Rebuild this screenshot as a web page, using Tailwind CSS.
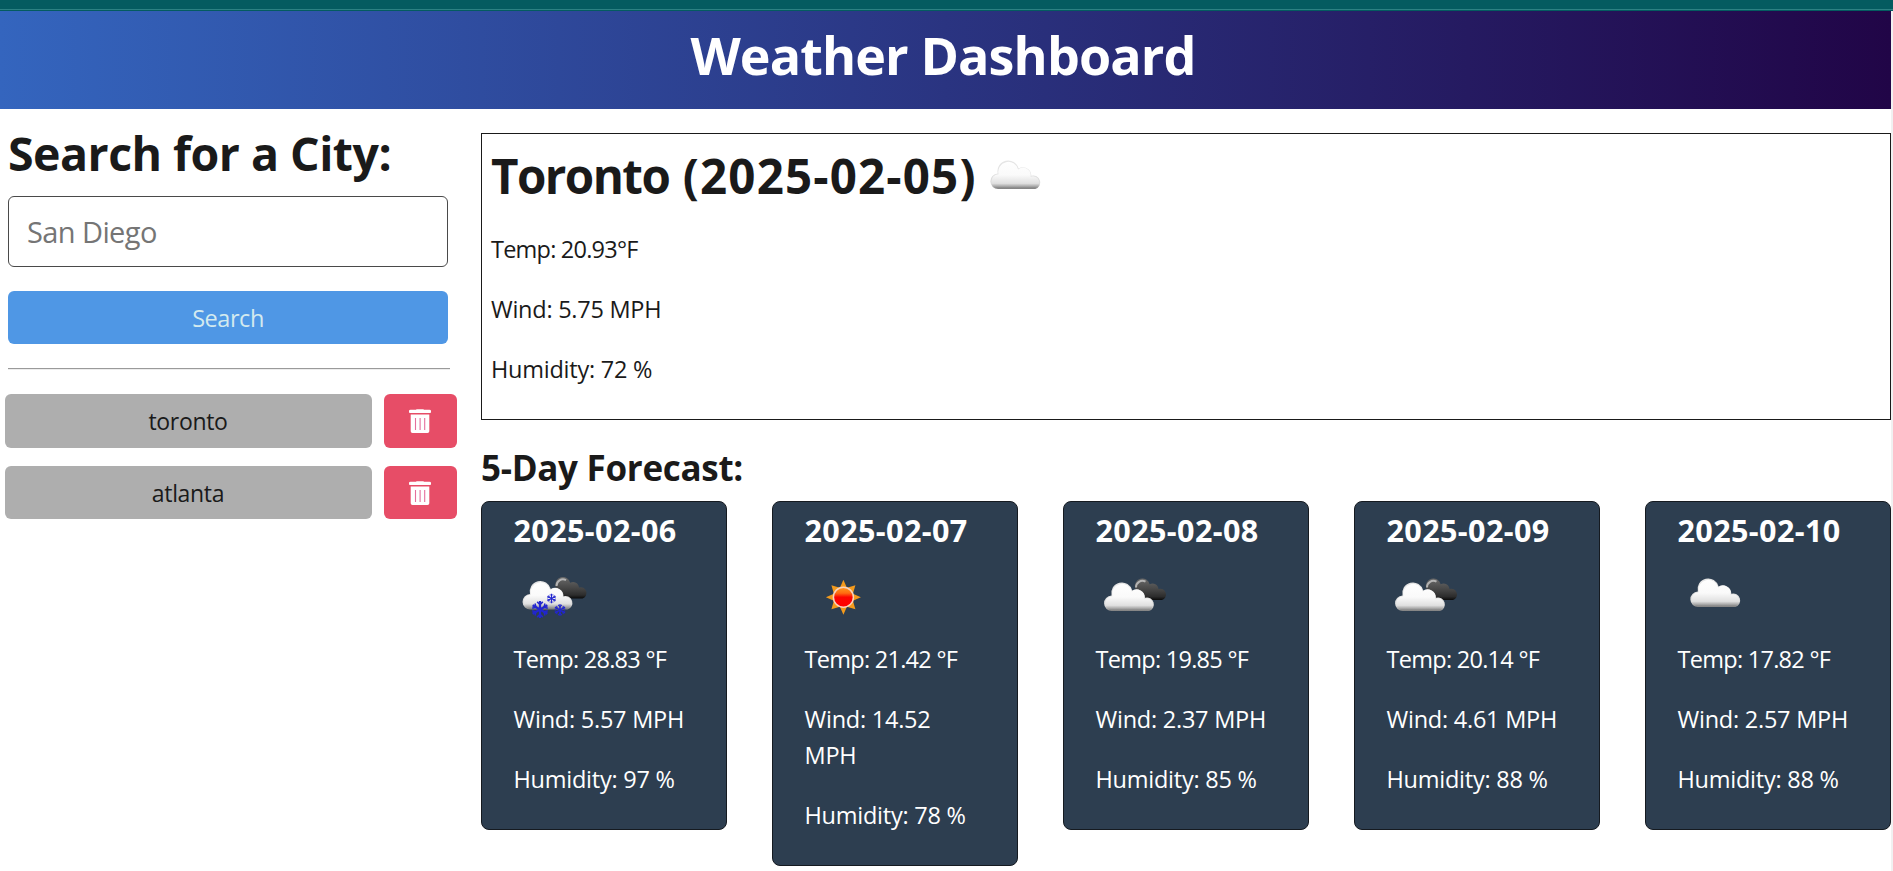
<!DOCTYPE html>
<html lang="en">
<head>
<meta charset="utf-8">
<title>Weather Dashboard</title>
<script src="https://cdn.jsdelivr.net/npm/@tailwindcss/browser@4"></script>
</head>
<body class="h-[871px] overflow-hidden bg-white font-['Open_Sans',sans-serif] text-[23.5px] leading-9 text-[#1a1a1a]">
<svg class="absolute size-0">
  <defs>
    <linearGradient id="white" gradientUnits="userSpaceOnUse" x1="0" y1="22" x2="0" y2="52">
      <stop offset="0" stop-color="#fff"/><stop offset=".5" stop-color="#fafafa"/><stop offset=".78" stop-color="#e0e0e0"/><stop offset=".88" stop-color="#a8a8a8"/><stop offset="1" stop-color="#585858"/>
    </linearGradient>
    <linearGradient id="edge" gradientUnits="userSpaceOnUse" x1="0" y1="22" x2="0" y2="52">
      <stop offset="0" stop-color="#e6e6e6"/><stop offset=".8" stop-color="#dadada"/><stop offset="1" stop-color="#707070"/>
    </linearGradient>
    <linearGradient id="dark" gradientUnits="userSpaceOnUse" x1="0" y1="19" x2="0" y2="41">
      <stop offset="0" stop-color="#686868"/><stop offset=".55" stop-color="#414141"/><stop offset=".8" stop-color="#2c2c2c"/><stop offset="1" stop-color="#000"/>
    </linearGradient>
    <linearGradient id="sunfill" x1="0" y1="0" x2="0" y2="1">
      <stop offset="0" stop-color="#ff9a1c"/><stop offset=".3" stop-color="#ff6a10"/><stop offset=".5" stop-color="#fb0500"/><stop offset="1" stop-color="#ff0000"/>
    </linearGradient>
    <path id="shape" d="M31 51a7.7 7.7 0 0 1-.5-15.4A10.6 10.6 0 0 1 51.3 30.6A8.4 8.4 0 0 1 64 37.8A6.8 6.8 0 1 1 68 51Z"/>
    <g id="cloud"><use href="#shape" fill="url(#edge)"/><path d="M31 50.3a7 7 0 0 1 .2-14A9.8 9.8 0 0 1 50.8 31.6A7.6 7.6 0 0 1 63.3 38.7A6 6 0 1 1 68 50.3Z" fill="url(#white)"/></g>
    <g id="darkcloud">
      <path d="M54 28a7.5 7.5 0 0 1 14.7-3.8A6 6 0 0 1 77.5 29A5.6 5.6 0 0 1 81 40H60Z" fill="url(#dark)"/>
      <path d="M55 27.5a6.4 6.4 0 0 1 9.5-5.8" fill="none" stroke="#b4b4b4" stroke-width="2"/>
    </g>
    <g id="flake" fill="none" stroke="#2226cf" stroke-width="2.2">
      <path d="M0-8.5V8.5M-7.4-4.2L7.4 4.2M-7.4 4.2L7.4-4.2"/>
      <path stroke-width="1.5" d="M-2.8-7.6L0-4.8L2.8-7.6M-2.8 7.6L0 4.8L2.8 7.6M-7.8-1.2L-4-2.3L-5-6M7.8 1.2L4 2.3L5 6M-7.8 1.2L-4 2.3L-5 6M7.8-1.2L4-2.3L5-6"/>
    </g>
    <g id="trash">
      <path fill="#fff" d="M7 0.8Q7 .2 7.8 .2H14.2Q15 .2 15 .8H20.5Q22 .8 22 2V3.2Q22 4 21 4H1Q0 4 0 3.2V2Q0 .8 1.5 .8ZM1.7 5.5H20.3V22.3Q20.3 24 18.5 24H3.5Q1.7 24 1.7 22.3Z"/>
      <path stroke="#e56f9d" stroke-width="1.1" d="M6.5 9V21M11.1 9V21M15.7 9V21"/>
    </g>
  </defs>
</svg>

<div class="h-[9px] bg-[#045b60]"></div>
<div class="h-px bg-[#2c8183]"></div>
<div class="h-px bg-[#045b60]"></div>

<div class="flex h-[860px]">
  <div class="w-[1891px] shrink-0">
    <header class="h-[98px] bg-linear-to-r/srgb from-[#3465be] via-[#2a3481] to-[#210547] pt-[11px] pr-[5px] text-center text-[52px] leading-[66px] font-bold tracking-[-0.87px] text-white">
      <h1>Weather Dashboard</h1>
    </header>

    <div class="flex">
      <aside class="w-[481px] shrink-0 pt-[15px]">
        <h2 class="pl-2 text-[46.5px] leading-[58px] font-bold tracking-[-0.53px]">Search for a City:</h2>
        <input class="mt-[14px] ml-2 block h-[71px] w-[440px] rounded-md border border-[#4a4a4a] px-[18px] text-[29px] tracking-[-0.6px] placeholder:text-[#757575]" placeholder="San Diego">
        <button class="mt-6 ml-2 block h-[53px] w-[440px] rounded-md bg-[#4f97e5] text-center tracking-[-0.45px] text-[#d3eaef]">Search</button>
        <hr class="mt-6 ml-2 h-[2px] w-[442px] border-t border-b border-t-[#9a9a9a] border-b-[#ededed]">
        <div class="mt-6 ml-[5px] flex h-[54px] gap-3">
          <button class="w-[367px] rounded-md bg-[#aeaeae] pr-px text-[23px] tracking-[-0.33px]">toronto</button>
          <button class="flex w-[73px] items-start justify-center rounded-md bg-[#e74d67] pt-[15px] pr-px"><svg class="h-6 w-[22px]" viewBox="0 0 22 24"><use href="#trash"/></svg></button>
        </div>
        <div class="mt-[18px] ml-[5px] flex h-[53px] gap-3">
          <button class="w-[367px] rounded-md bg-[#aeaeae] pr-px text-[23px] tracking-[-0.33px]">atlanta</button>
          <button class="flex w-[73px] items-start justify-center rounded-md bg-[#e74d67] pt-[15px] pr-px"><svg class="h-6 w-[22px]" viewBox="0 0 22 24"><use href="#trash"/></svg></button>
        </div>
      </aside>

      <main class="w-[1410px] shrink-0 pt-6">
        <section class="h-[287px] border border-[#1a1a1a] pt-[13px] pl-[9px]">
          <div class="flex h-[57px]">
            <h2 class="w-[493px] shrink-0 text-[47.5px] leading-[57px] font-bold tracking-[1.15px] whitespace-nowrap"><span class="tracking-[-1.55px]">Toronto</span> (2025-02-05)</h2>
            <svg class="h-[57px] w-[60px]" viewBox="16.7 9 60 57"><use href="#cloud"/></svg>
          </div>
          <div class="mt-[27px] flex flex-col gap-6">
            <p class="tracking-[-0.78px]">Temp: 20.93°F</p>
            <p class="tracking-[-0.26px]">Wind: 5.75 MPH</p>
            <p class="tracking-[-0.24px]">Humidity: 72 %</p>
          </div>
        </section>

        <h3 class="mt-[26px] text-[35px] leading-[44px] font-bold tracking-[-0.3px]">5-Day Forecast:</h3>

        <div class="mt-[11px] flex items-start justify-between text-white">
          <article class="w-[246px] rounded-lg border border-[#151a20] bg-[#2d3e50] pt-[10px] pr-8 pb-8 pl-[31.5px]">
            <h4 class="mb-[-1px] text-[30.5px] font-bold tracking-[0.4px] whitespace-nowrap">2025-02-06</h4>
            <svg class="size-[94px]" viewBox="13 -13 94 94"><use href="#darkcloud" x=".5" y="-1.5"/><use href="#cloud" x="-1.5" y="-1.5"/><use href="#flake" transform="translate(39 49.5)"/><use href="#flake" transform="translate(50.5 38.5) scale(.55)"/><use href="#flake" transform="translate(59 50) scale(.68)"/></svg>
            <p class="mb-6 tracking-[-0.72px]">Temp: 28.83 °F</p>
            <p class="mb-6 tracking-[-0.24px]">Wind: 5.57 MPH</p>
            <p class="tracking-[-0.24px]">Humidity: 97 %</p>
          </article>
          <article class="w-[246px] rounded-lg border border-[#151a20] bg-[#2d3e50] pt-[10px] pr-8 pb-8 pl-[31.5px]">
            <h4 class="mb-[-1px] text-[30.5px] font-bold tracking-[0.4px] whitespace-nowrap">2025-02-07</h4>
            <svg class="size-[94px]" viewBox="4 -13 94 94"><g transform="translate(42.4 37.2)"><path fill="#f39a1c" d="M0-17.5L3.5-9.5L12-12L9.5-3.5L17.5 0L9.5 3.5L12 12L3.5 9.5L0 17.5L-3.5 9.5L-12 12L-9.5 3.5L-17.5 0L-9.5-3.5L-12-12L-3.5-9.5Z"/><circle r="10" fill="url(#sunfill)" stroke="#f8d3bd" stroke-width="1.5"/></g></svg>
            <p class="mb-6 tracking-[-0.72px]">Temp: 21.42 °F</p>
            <p class="mb-6 tracking-[-0.24px]">Wind: 14.52 MPH</p>
            <p class="tracking-[-0.24px]">Humidity: 78 %</p>
          </article>
          <article class="w-[246px] rounded-lg border border-[#151a20] bg-[#2d3e50] pt-[10px] pr-8 pb-8 pl-[31.5px]">
            <h4 class="mb-[-1px] text-[30.5px] font-bold tracking-[0.4px] whitespace-nowrap">2025-02-08</h4>
            <svg class="size-[94px]" viewBox="15 -13 94 94"><use href="#darkcloud"/><use href="#cloud"/></svg>
            <p class="mb-6 tracking-[-0.72px]">Temp: 19.85 °F</p>
            <p class="mb-6 tracking-[-0.24px]">Wind: 2.37 MPH</p>
            <p class="tracking-[-0.24px]">Humidity: 85 %</p>
          </article>
          <article class="w-[246px] rounded-lg border border-[#151a20] bg-[#2d3e50] pt-[10px] pr-8 pb-8 pl-[31.5px]">
            <h4 class="mb-[-1px] text-[30.5px] font-bold tracking-[0.4px] whitespace-nowrap">2025-02-09</h4>
            <svg class="size-[94px]" viewBox="15 -13 94 94"><use href="#darkcloud"/><use href="#cloud"/></svg>
            <p class="mb-6 tracking-[-0.72px]">Temp: 20.14 °F</p>
            <p class="mb-6 tracking-[-0.24px]">Wind: 4.61 MPH</p>
            <p class="tracking-[-0.24px]">Humidity: 88 %</p>
          </article>
          <article class="w-[246px] rounded-lg border border-[#151a20] bg-[#2d3e50] pt-[10px] pr-8 pb-8 pl-[31.5px]">
            <h4 class="mb-[-1px] text-[30.5px] font-bold tracking-[0.4px] whitespace-nowrap">2025-02-10</h4>
            <svg class="size-[94px]" viewBox="10.7 -9 94 94"><use href="#cloud"/></svg>
            <p class="mb-6 tracking-[-0.72px]">Temp: 17.82 °F</p>
            <p class="mb-6 tracking-[-0.24px]">Wind: 2.57 MPH</p>
            <p class="tracking-[-0.24px]">Humidity: 88 %</p>
          </article>
        </div>
      </main>
    </div>
  </div>
  <div class="w-[2px] shrink-0 bg-[#f1f1f1]"></div>
</div>
</body>
</html>
